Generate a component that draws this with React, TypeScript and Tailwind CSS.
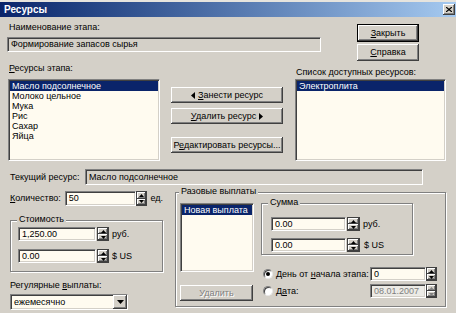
import type { ReactNode } from "react";

const sunken =
  "border border-t-[#808080] border-l-[#808080] border-b-white border-r-white shadow-[inset_1px_1px_0_#404040,inset_-1px_-1px_0_#d4d0c8]";
const raised =
  "bg-[#d4d0c8] shadow-[inset_-1px_-1px_0_#404040,inset_1px_1px_0_#ffffff,inset_-2px_-2px_0_#808080,inset_2px_2px_0_#d4d0c8]";
const etched = "border border-[#808080] shadow-[1px_1px_0_#ffffff,inset_1px_1px_0_#ffffff]";
const cream = "bg-[#fffbf0]";

function U({ children }: { children: ReactNode }) {
  return <span className="underline underline-offset-1">{children}</span>;
}

function Btn({
  children,
  className = "",
  def = false,
  disabled = false,
}: {
  children: ReactNode;
  className?: string;
  def?: boolean;
  disabled?: boolean;
}) {
  return (
    <div
      className={`${raised} flex items-center justify-center gap-[3px] ${
        def ? "border border-black" : ""
      } ${disabled ? "text-[#808080] [text-shadow:1px_1px_0_#ffffff]" : ""} ${className}`}
    >
      {children}
    </div>
  );
}

function Arrow({ dir, color = "#000" }: { dir: "up" | "down"; color?: string }) {
  return (
    <svg width="5" height="3" viewBox="0 0 5 3">
      <path d={dir === "up" ? "M2.5 0L5 3H0Z" : "M0 0H5L2.5 3Z"} fill={color} />
    </svg>
  );
}

function Spin({ w = "w-[12px]", disabled = false }: { w?: string; disabled?: boolean }) {
  const c = disabled ? "#808080" : "#000";
  return (
    <div className={`${w} h-full flex flex-col border border-[#404040]`}>
      <div className={`${raised} flex-1 flex items-center justify-center`}>
        <Arrow dir="up" color={c} />
      </div>
      <div className={`${raised} flex-1 flex items-center justify-center`}>
        <Arrow dir="down" color={c} />
      </div>
    </div>
  );
}

function Field({
  children,
  className = "",
  bg = cream,
}: {
  children?: ReactNode;
  className?: string;
  bg?: string;
}) {
  return (
    <div className={`${sunken} ${bg} flex items-center pl-[3px] whitespace-nowrap overflow-hidden ${className}`}>
      {children}
    </div>
  );
}

function Group({
  title,
  className = "",
  labelLeft = "left-[6px]",
  children,
}: {
  title: string;
  className?: string;
  labelLeft?: string;
  children: ReactNode;
}) {
  return (
    <div className={`relative ${etched} ${className}`}>
      <div className={`absolute -top-[7px] ${labelLeft} bg-[#d4d0c8] px-[2px] whitespace-nowrap`}>{title}</div>
      {children}
    </div>
  );
}

function Radio({ checked }: { checked?: boolean }) {
  return (
    <div className="w-[10px] h-[10px] rounded-full bg-white border border-t-[#808080] border-l-[#808080] border-b-[#e8e8e8] border-r-[#e8e8e8] flex items-center justify-center shadow-[inset_1px_1px_0_#404040]">
      {checked && <div className="w-[4px] h-[4px] rounded-full bg-black" />}
    </div>
  );
}

function List({ items, className = "" }: { items: string[]; className?: string }) {
  return (
    <div className={`${sunken} ${cream} p-[1px] ${className}`}>
      {items.map((it, i) => (
        <div
          key={it}
          className={`h-[10px] leading-[10px] px-[2px] whitespace-nowrap ${
            i === 0 ? "bg-[#0a246a] text-white" : ""
          }`}
        >
          {it}
        </div>
      ))}
    </div>
  );
}

export default function App() {
  return (
    <div className="w-[456px] h-[313px] overflow-hidden bg-[#d4d0c8] text-black text-[9px] leading-[11px] font-['Liberation_Sans',Arial,sans-serif]">
      {/* title bar */}
      <div className="h-[2px] bg-[#e6e4de]" />
      <div className="h-[15px] flex items-center bg-gradient-to-r from-[#0a246a] to-[#a6caf0] pl-[4px] pr-[1px]">
        <span className="text-white font-bold text-[10px]">Ресурсы</span>
        <div className={`ml-auto w-[12px] h-[11px] ${raised} flex items-center justify-center`}>
          <svg width="6" height="5" viewBox="0 0 6 5">
            <path d="M0 0L6 5M6 0L0 5" stroke="#000" strokeWidth="1.2" />
          </svg>
        </div>
      </div>

      {/* stage name + buttons */}
      <div className="flex">
        <div className="ml-[7px] w-[314px]">
          <div className="mt-[5px] pl-[2px]">Наименование этапа:</div>
          <Field className="mt-[4px] h-[15px]" bg="bg-[#d4d0c8]">
            Формирование запасов сырья
          </Field>
        </div>
        <div className="ml-[36px] flex flex-col">
          <Btn def className="mt-[7px] w-[62px] h-[18px]">
            <span>
              <U>З</U>акрыть
            </span>
          </Btn>
          <Btn className="mt-[2px] w-[62px] h-[17px]">
            <span>
              <U>С</U>правка
            </span>
          </Btn>
        </div>
      </div>

      {/* resource lists */}
      <div className="flex mt-[2px]">
        <div className="ml-[8px] w-[152px]">
          <div className="pl-[1px] h-[11px]">
            <U>Р</U>есурсы этапа:
          </div>
          <List
            className="mt-[5px] h-[82px]"
            items={["Масло подсолнечное", "Молоко цельное", "Мука", "Рис", "Сахар", "Яйца"]}
          />
        </div>
        <div className="ml-[11px] w-[112px] flex flex-col">
          <Btn className="mt-[24px] h-[16px]">
            <svg width="4" height="7" viewBox="0 0 4 7">
              <path d="M4 0V7L0 3.5Z" fill="#000" />
            </svg>
            <span>
              <U>З</U>анести ресурс
            </span>
          </Btn>
          <Btn className="mt-[5px] h-[16px]">
            <span>
              <U>У</U>далить ресурс
            </span>
            <svg width="4" height="7" viewBox="0 0 4 7">
              <path d="M0 0V7L4 3.5Z" fill="#000" />
            </svg>
          </Btn>
          <Btn className="mt-[13px] h-[16px]">
            <span>
              Р<U>е</U>дактировать ресурсы...
            </span>
          </Btn>
        </div>
        <div className="ml-[12px] w-[151px]">
          <div className="mt-[4px] pl-[1px] h-[11px]">Список доступных ресурсов:</div>
          <List className="mt-[1px] h-[82px]" items={["Электроплита"]} />
        </div>
      </div>

      {/* current resource */}
      <div className="flex items-center mt-[8px] h-[16px]">
        <div className="ml-[10px] w-[75px]">Текущий ресурс:</div>
        <Field className="w-[338px] h-[16px]" bg="bg-[#d4d0c8]">
          Масло подсолнечное
        </Field>
      </div>

      {/* lower part */}
      <div className="flex">
        <div className="ml-[10px] w-[153px]">
          <div className="mt-[6px] h-[15px] flex items-center">
            <div className="w-[55px]">
              <U>К</U>оличество:
            </div>
            <Field className="w-[72px] h-[15px]">50</Field>
            <Spin w="w-[11px]" />
            <span className="ml-[3px]">ед.</span>
          </div>

          <Group title="Стоимость" className="mt-[14px] h-[52px] w-[153px]">
            <div className="pl-[7px] pt-[6px]">
              <div className="h-[14px] flex items-center">
                <Field className="w-[78px] h-[14px]">1,250.00</Field>
                <div className="ml-[1px] h-[14px]">
                  <Spin />
                </div>
                <span className="ml-[3px]">руб.</span>
              </div>
              <div className="mt-[8px] h-[14px] flex items-center">
                <Field className="w-[78px] h-[14px]">0.00</Field>
                <div className="ml-[1px] h-[14px]">
                  <Spin />
                </div>
                <span className="ml-[3px]">$ US</span>
              </div>
            </div>
          </Group>

          <div className="mt-[8px]">
            Регулярные <U>в</U>ыплаты:
          </div>
          <div className={`${sunken} ${cream} mt-[3px] w-[118px] h-[16px] flex items-center`}>
            <span className="pl-[3px] flex-1">ежемесячно</span>
            <div className={`${raised} w-[14px] h-full flex items-center justify-center`}>
              <svg width="7" height="4" viewBox="0 0 7 4">
                <path d="M0 0H7L3.5 4Z" fill="#000" />
              </svg>
            </div>
          </div>
        </div>

        <Group title="Разовые выплаты" labelLeft="left-[3px]" className="ml-[12px] mt-[7px] w-[271px] h-[115px]">
          <div className="flex pl-[4px] pt-[10px]">
            <div className="w-[74px]">
              <List className="h-[69px]" items={["Новая выплата"]} />
              <Btn disabled className="mt-[13px] w-[73px] h-[16px]">
                Удалить
              </Btn>
            </div>
            <div className="ml-[7px]">
              <Group title="Сумма" className="w-[152px] h-[52px]">
                <div className="pl-[9px] pt-[13px]">
                  <div className="h-[14px] flex items-center">
                    <Field className="w-[75px] h-[14px]">0.00</Field>
                    <div className="ml-[1px] h-[14px]">
                      <Spin w="w-[13px]" />
                    </div>
                    <span className="ml-[3px]">руб.</span>
                  </div>
                  <div className="mt-[7px] h-[14px] flex items-center">
                    <Field className="w-[75px] h-[14px]">0.00</Field>
                    <div className="ml-[1px] h-[14px]">
                      <Spin w="w-[13px]" />
                    </div>
                    <span className="ml-[4px]">$ US</span>
                  </div>
                </div>
              </Group>

              <div className="mt-[12px] h-[14px] flex items-center">
                <div className="w-[109px] flex items-center">
                  <div className="ml-[2px]">
                    <Radio checked />
                  </div>
                  <span className="ml-[3px] whitespace-nowrap">
                    День от <U>н</U>ачала этапа:
                  </span>
                </div>
                <Field className="w-[56px] h-[14px]">0</Field>
                <div className="h-[14px]">
                  <Spin w="w-[11px]" />
                </div>
              </div>
              <div className="mt-[3px] h-[14px] flex items-center">
                <div className="w-[109px] flex items-center">
                  <div className="ml-[2px]">
                    <Radio />
                  </div>
                  <span className="ml-[3px]">
                    Д<U>а</U>та:
                  </span>
                </div>
                <Field className="w-[56px] h-[14px] text-[#808080]" bg="bg-[#ecebe6]">
                  08.01.2007
                </Field>
                <div className="h-[14px]">
                  <Spin w="w-[11px]" disabled />
                </div>
              </div>
            </div>
          </div>
        </Group>
      </div>
    </div>
  );
}
